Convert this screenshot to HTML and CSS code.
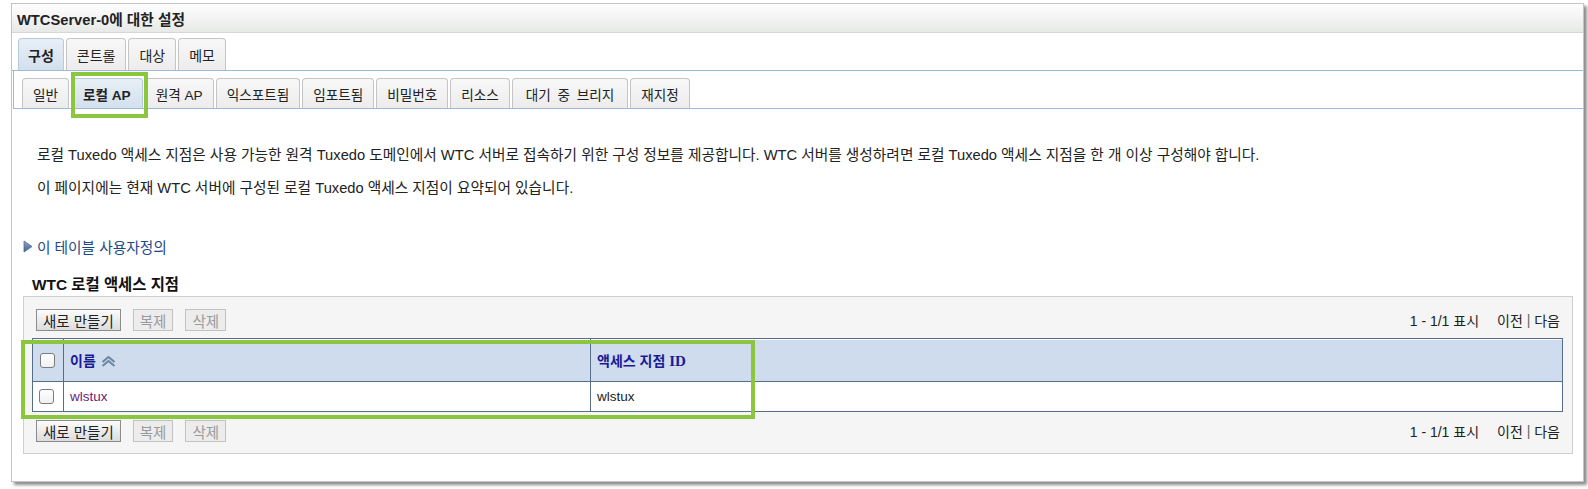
FILE: index.html
```html
<!DOCTYPE html>
<html lang="ko">
<head>
<meta charset="utf-8">
<link rel="stylesheet" href="styles.css">
</head>
<body>
<div class="panel">
  <div class="hdr"><span class="title">WTCServer-0에 대한 설정</span></div>
  <div class="tabs1">
    <div class="tab t1 sel">구성</div>
    <div class="tab t1">콘트롤</div>
    <div class="tab t1">대상</div>
    <div class="tab t1">메모</div>
  </div>
  <div class="tabs2">
    <div class="tab t2">일반</div>
    <div class="tab t2 sel">로컬 AP</div>
    <div class="tab t2">원격 AP</div>
    <div class="tab t2">익스포트됨</div>
    <div class="tab t2">임포트됨</div>
    <div class="tab t2">비밀번호</div>
    <div class="tab t2">리소스</div>
    <div class="tab t2 spaced">대기 중 브리지</div>
    <div class="tab t2">재지정</div>
  </div>
  <div class="content">
    <p class="para first">로컬 Tuxedo 액세스 지점은 사용 가능한 원격 Tuxedo 도메인에서 WTC 서버로 접속하기 위한 구성 정보를 제공합니다. WTC 서버를 생성하려면 로컬 Tuxedo 액세스 지점을 한 개 이상 구성해야 합니다.</p>
    <p class="para">이 페이지에는 현재 WTC 서버에 구성된 로컬 Tuxedo 액세스 지점이 요약되어 있습니다.</p>
    <div class="custom">
      <svg class="tri" width="10" height="13" viewBox="0 0 10 13">
        <defs><linearGradient id="tg" x1="0" y1="0" x2="0" y2="1"><stop offset="0" stop-color="#8fa9cc"/><stop offset="1" stop-color="#3d5f8f"/></linearGradient></defs>
        <path d="M1 1 L9 6.5 L1 12 Z" fill="url(#tg)" stroke="#4b6a96" stroke-width="0.8" stroke-linejoin="round"/>
      </svg>
      <span class="custom-link">이 테이블 사용자정의</span>
    </div>
    <div class="sec-title">WTC 로컬 액세스 지점</div>
    <div class="section">
      <div class="toolbar">
        <div class="btns">
          <span class="btn">새로 만들기</span>
          <span class="btn dis">복제</span>
          <span class="btn dis">삭제</span>
        </div>
        <div class="pager">1 - 1/1 표시<span class="gap"></span>이전 <span class="bar">|</span> 다음</div>
      </div>
      <table class="grid">
        <thead>
          <tr>
            <th class="cb"><input type="checkbox" class="chk"></th>
            <th class="name">이름 <svg class="sort" width="15" height="11" viewBox="0 0 15 11"><path d="M1.5 6 L7.5 1 L13.5 6 M1.5 10 L7.5 5 L13.5 10" fill="none" stroke="#6f86a6" stroke-width="2.2" stroke-linejoin="round"/></svg></th>
            <th class="idc">액세스 지점 <span class="serif">ID</span></th>
          </tr>
        </thead>
        <tbody>
          <tr>
            <td class="cb"><input type="checkbox" class="chk"></td>
            <td class="name"><span class="visited">wlstux</span></td>
            <td class="idc">wlstux</td>
          </tr>
        </tbody>
      </table>
      <div class="toolbar bottom">
        <div class="btns">
          <span class="btn">새로 만들기</span>
          <span class="btn dis">복제</span>
          <span class="btn dis">삭제</span>
        </div>
        <div class="pager">1 - 1/1 표시<span class="gap"></span>이전 <span class="bar">|</span> 다음</div>
      </div>
    </div>
  </div>
</div>
<div class="mark mark-tab"></div>
<div class="mark mark-table"></div>
</body>
</html>
```
FILE: styles.css
```css
* { box-sizing: border-box; }
html, body { margin: 0; padding: 0; background: #fff; }
body {
  font-family: "Liberation Sans", "Noto Sans CJK KR", sans-serif;
  font-size: 14px;
  color: #222;
  position: relative;
  width: 1588px;
  height: 489px;
  overflow: hidden;
}
.panel {
  margin: 3px 0 0 11px;
  width: 1573px;
  height: 479px;
  border: 1px solid #c4c4c4;
  background: #fff;
  box-shadow: 3px 3px 3px rgba(0,0,0,0.45);
}
.hdr {
  height: 29px;
  border-bottom: 1px solid #d6d8d6;
  background: linear-gradient(#fefefe, #e7e9e7);
  display: flex;
  align-items: center;
  padding-left: 5px;
}
.title { font-weight: bold; font-size: 14.7px; color: #222; }
.tabs1 {
  margin-top: 5px;
  display: flex;
  gap: 2px;
  padding-left: 6px;
  border-bottom: 1px solid #9dbad5;
}
.tab {
  border: 1px solid #c4c4c4;
  border-bottom: none;
  border-radius: 4px 4px 0 0;
  background: linear-gradient(#f8f8f8, #ececec);
  display: flex;
  align-items: center;
  justify-content: center;
  color: #222;
  white-space: nowrap;
}
.t1 { height: 32px; padding: 0 9px; font-size: 14px; }
.t1 + .t1 { padding: 0 10px; }
.tab.sel {
  background: linear-gradient(#e8eff7, #d3e0ed);
  border-color: #b7c9dc;
  font-weight: bold;
}
.tabs2 {
  margin-left: 1px;
  border-left: 1px solid #9dbad5;
  border-bottom: 1px solid #9dbad5;
  padding: 7px 0 0 8px;
  display: flex;
  gap: 2px;
}
.t2 { height: 30px; padding: 0 10px; font-size: 13.6px; }
.t2.sel { padding: 0 11px; }
.t2.spaced { padding: 0 13px; word-spacing: 3px; }
.para {
  margin: 15px 0 0 25px;
  font-size: 14.7px;
  line-height: 18px;
  color: #222;
}
.para.first { margin-top: 37px; }
.custom {
  margin: 40px 0 0 11px;
  display: flex;
  align-items: center;
  height: 18px;
}
.tri { display: block; margin-right: 4px; }
.custom-link { color: #1d4a86; font-size: 14.7px; }
.sec-title {
  margin: 21px 0 0 20px;
  font-weight: bold;
  font-size: 15.4px;
  line-height: 18px;
  color: #111;
}
.section {
  margin: 2px 10px 0 11px;
  border: 1px solid #cfcfcf;
  background: #f5f5f5;
  padding: 12px 9px 11px 8px;
  height: 158px;
}
.toolbar {
  display: flex;
  justify-content: space-between;
  align-items: center;
  height: 22px;
}
.toolbar.bottom { margin-top: 8px; }
.btns { display: flex; gap: 12px; padding-left: 4px; }
.btn {
  height: 22px;
  padding: 0 6px;
  border: 1px solid #8c8c8c;
  background: linear-gradient(#fbfbfb, #dcdcdc);
  display: flex;
  align-items: center;
  font-size: 14.5px;
  color: #222;
}
.btn.dis {
  border-color: #c2c2c2;
  background: #ececec;
  color: #9a9a9a;
}
.pager { font-size: 14px; color: #222; padding-right: 3px; display: flex; align-items: center; white-space: pre; }
.gap { display: inline-block; width: 18px; }
.bar { color: #666; }
.grid {
  margin-top: 7px;
  width: 100%;
  border-collapse: collapse;
  border: 1px solid #566d8c;
  background: #fff;
}
.grid th {
  background: #cfdcee;
  height: 43px;
  text-align: left;
  font-weight: bold;
  color: #1a1a96;
  border-top: 1px solid #566d8c;
  box-shadow: inset 0 1px 0 #fff;
  border-bottom: 1px solid #566d8c;
  font-size: 14px;
}
.grid td { height: 30px; font-size: 13.5px; color: #222; }
.grid .cb { width: 31px; padding: 0 0 0 7px; border-right: 1px solid #566d8c; }
.grid td.cb { padding-left: 6px; }
.grid .name { width: 527px; padding: 0 6px; border-right: 1px solid #566d8c; }
.grid .idc { padding: 0 6px; }
.chk {
  -webkit-appearance: none;
  appearance: none;
  width: 15px;
  height: 15px;
  margin: 0;
  display: block;
  border: 1px solid #7c7c7c;
  border-radius: 3px;
  background: linear-gradient(#fff, #f0f0f0);
}
.sort { vertical-align: -1px; margin-left: 1px; }
.serif { font-family: "Liberation Serif", serif; font-size: 15px; }
.visited { color: #6b1d78; }
.mark {
  position: absolute;
  border: 4px solid #8cc63f;
  pointer-events: none;
}
.mark-tab { left: 71px; top: 72px; width: 77px; height: 46px; }
.mark-table { left: 21px; top: 340px; width: 734px; height: 79px; }
```
